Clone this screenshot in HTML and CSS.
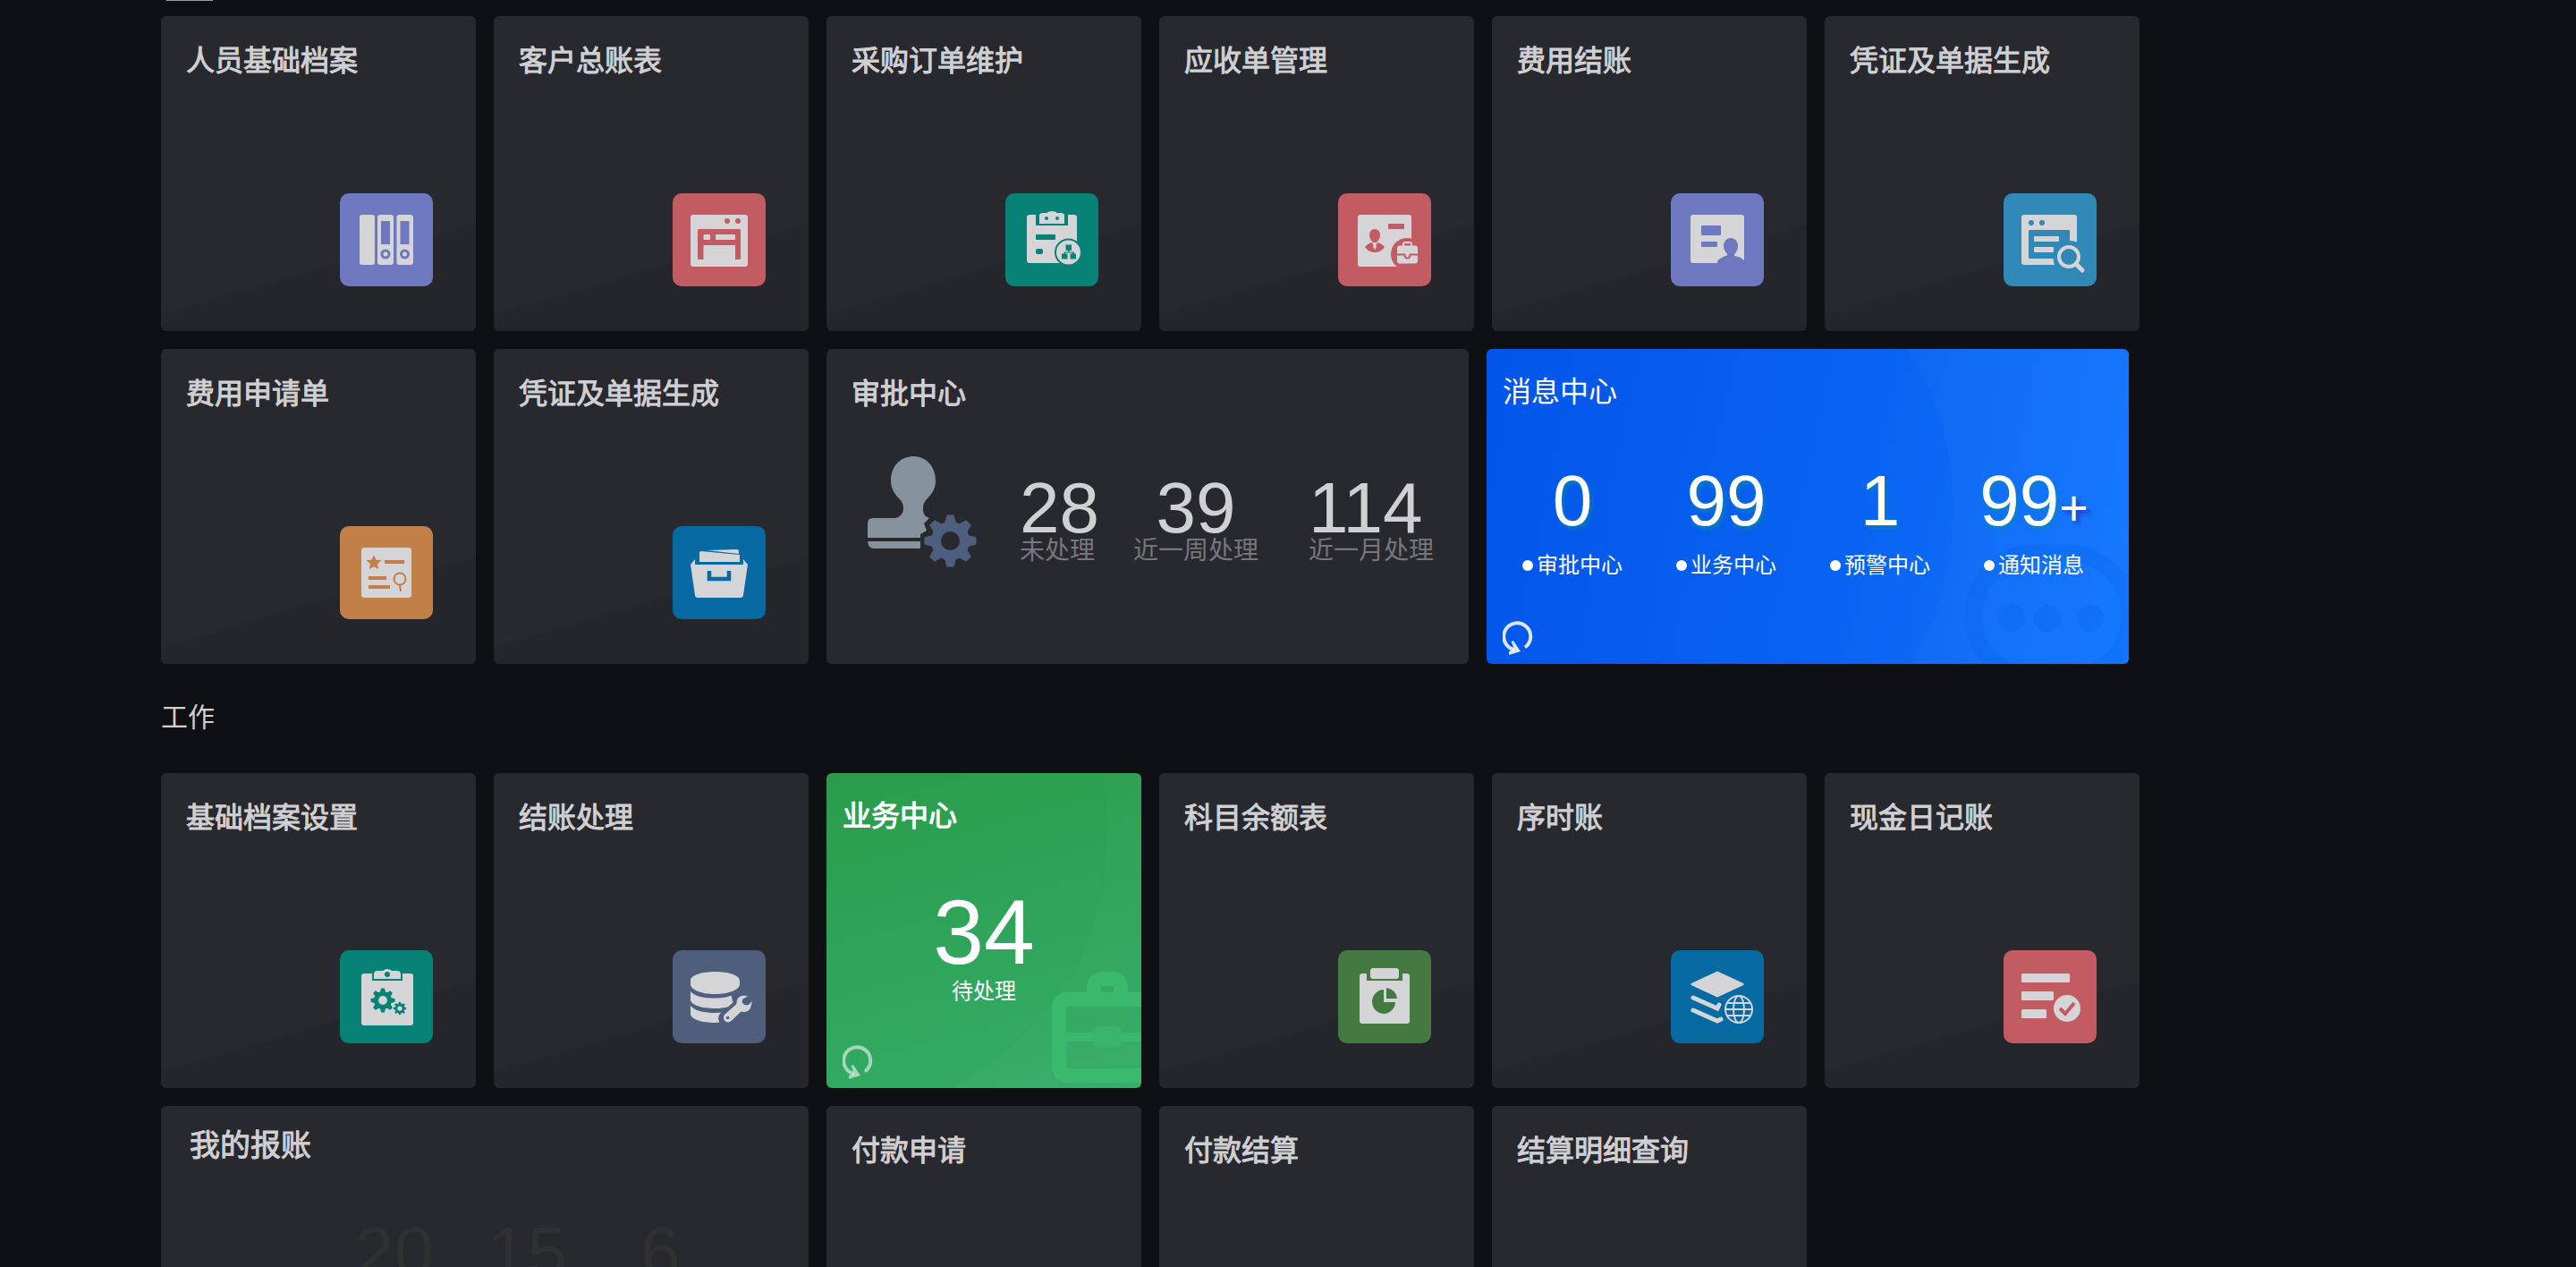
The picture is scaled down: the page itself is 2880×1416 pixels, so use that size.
FILE: index.html
```html
<!DOCTYPE html>
<html lang="zh-CN">
<head>
<meta charset="utf-8">
<title>工作台</title>
<meta name="viewport" content="width=device-width, initial-scale=1">
<link rel="stylesheet" href="styles.css">
</head>
<body>
<svg class="defs" aria-hidden="true">
  <symbol id="gear" viewBox="0 0 60 60">
    <circle cx="30" cy="30" r="16" fill="none" stroke="currentColor" stroke-width="11"/>
    <path fill="currentColor" d="M26 1h8l3 11H23zM26 59h8l3-11H23zM1 26v8l11 3V23zM59 26v8l-11 3V23zM6.700 12.300l5.600-5.600 10 5.600-10 10zM53.300 12.300l-5.600-5.600-10 5.600 10 10zM6.700 47.700l5.600 5.600 10-5.600-10-10zM53.300 47.700l-5.600 5.600-10-5.600 10-10z"/>
  </symbol>
  <symbol id="refresh" viewBox="0 0 34 38">
    <path d="M25 29.500A15 15 0 1 0 13 32" fill="none" stroke="currentColor" stroke-width="4"/>
    <path d="M12 22l8 12-13 4v-4l6-2.500-3.500-8.500z" fill="currentColor"/>
  </symbol>
</svg>
<main class="workspace">
  <div class="tab-line"></div>
  <div class="tiles">
    <a class="tile" href="#"><h3>人员基础档案</h3>
      <svg class="icon purple" viewBox="0 0 104 104"><rect x="22" y="24" width="17" height="56" rx="3"/><rect x="42" y="24" width="18" height="56" rx="3"/><rect x="63.500" y="24" width="18.500" height="56" rx="3"/><g class="cut"><rect x="46" y="31" width="10" height="26"/><rect x="67.500" y="31" width="10" height="26"/><circle cx="51" cy="68" r="5.500"/><circle cx="72.500" cy="68" r="5.500"/></g><circle cx="51" cy="68" r="2.500"/><circle cx="72.500" cy="68" r="2.500"/></svg></a>
    <a class="tile" href="#"><h3>客户总账表</h3>
      <svg class="icon red" viewBox="0 0 104 104"><rect x="20" y="24" width="64" height="58" rx="3"/><g class="cut"><circle cx="61" cy="31" r="3"/><circle cx="73" cy="31" r="3"/><rect x="28" y="40" width="48" height="34" rx="1"/></g><rect x="34.500" y="46" width="7.500" height="6" rx="1"/><rect x="48" y="46" width="22" height="6" rx="1"/><path d="M34.500 59q0-1 1-1H69q1 0 1 1v17H34.500z"/></svg></a>
    <a class="tile" href="#"><h3>采购订单维护</h3>
      <svg class="icon teal" viewBox="0 0 104 104"><rect x="24" y="24" width="56" height="54" rx="3"/><g class="cut"><path d="M34 22h36v14H34z"/><rect x="34" y="46" width="22" height="6" rx="1"/><rect x="34" y="62" width="8" height="6" rx="2"/><circle cx="70.500" cy="66" r="15.500"/></g><path d="M38 25q0-3 4-3h4q2-2 6-2t6 2h4q4 0 4 3v9H38z"/><circle cx="70.500" cy="66" r="13.500"/><g class="cut"><circle cx="46" cy="28" r="2"/><circle cx="58" cy="28" r="2"/><path d="M67.500 57.500h6.500v6.500h-2.500v1.500H77V67.500h2V73.500h-6.500V67.500H75v-1h-8v1h2.500v6H63v-6h2.500v-2H70v-1.500h-2.500z"/></g></svg></a>
    <a class="tile" href="#"><h3>应收单管理</h3>
      <svg class="icon red" viewBox="0 0 104 104"><rect x="22" y="24" width="60" height="58" rx="3"/><g class="cut"><rect x="56" y="34" width="18" height="6" rx="1"/><path d="M41 40c4 0 6 3 6 7 0 3-2 6-3.500 7.500L41 55l-2.500-.500C37 53 35 50 35 47c0-4 2-7 6-7z"/><path d="M30 60q3-4 8-5l3 5 3-5q5 1 8 5-4 6-11 6t-11-6z"/><circle cx="77" cy="68" r="18"/></g><path d="M40 56h2l1 4-2 3-2-3z"/><path d="M73 60v-3q0-2 2-2h5q2 0 2 2v3" fill="none" stroke="#d5d5d7" stroke-width="2"/><rect x="66" y="58.500" width="23" height="20" rx="3"/><path d="M66 68.500h8.500q0 4 3 4t3-4H89" class="cut-line"/></svg></a>
    <a class="tile" href="#"><h3>费用结账</h3>
      <svg class="icon purple" viewBox="0 0 104 104"><rect x="22" y="24" width="60" height="54" rx="3"/><g class="cut"><rect x="34" y="36" width="22" height="11" rx="1"/><rect x="34" y="54" width="18" height="6" rx="1"/><path d="M67 50c5 0 8 4 8 9 0 4-2 7-4 9.500v1.500q7 1 11 5v5H52v-4q4-5 11-6.500v-1.500c-2-2.500-4-5-4-9 0-5 3-9 8-9z"/></g></svg></a>
    <a class="tile" href="#"><h3>凭证及单据生成</h3>
      <svg class="icon sky" viewBox="0 0 104 104"><rect x="20" y="24" width="62" height="56" rx="3"/><g class="cut"><circle cx="31" cy="33" r="3"/><circle cx="43" cy="33" r="3"/><rect x="28" y="41" width="46" height="32" rx="1"/><path d="M74 53q5 0 9 2v26H58q-3-4-2-8z"/></g><rect x="34" y="48" width="28" height="6" rx="1"/><rect x="34" y="60" width="22" height="6" rx="1"/><circle cx="73" cy="71" r="15" class="cut"/><g fill="none" stroke="#d5d5d7" stroke-width="4"><circle cx="73" cy="71" r="11"/><path d="M81 79l7 7" stroke-width="5" stroke-linecap="round"/></g></svg></a>
  </div>

  <div class="tiles tiles-mixed">
    <a class="tile" href="#"><h3>费用申请单</h3>
      <svg class="icon orange" viewBox="0 0 104 104"><rect x="24" y="24" width="56" height="56" rx="3"/><g class="cut"><path d="M38 32l2.500 5.500 6 .700-4.500 4 1.200 6L38 45.200l-5.200 3 1.200-6-4.500-4 6-.700z"/><rect x="50" y="38" width="22" height="4"/><rect x="32" y="56" width="20" height="4"/><rect x="32" y="66" width="24" height="4"/></g><g class="cut-line"><circle cx="67" cy="59" r="6.500"/><path d="M67 65.500l1 7.500"/></g></svg></a>
    <a class="tile" href="#"><h3>凭证及单据生成</h3>
      <svg class="icon blue" viewBox="0 0 104 104"><path d="M20 43l5-6v6h54v-6l5 6-5 34q0 3-3 3H28q-3 0-3-3z"/><path d="M30 30q0-2 2-2l43 4v8H30zM38 27l33-1q3 0 3 2v3z"/><path d="M41 50v9h22v-9" fill="none" stroke="#076aa2" stroke-width="4.500"/></svg></a>
    <section class="tile">
      <h3>审批中心</h3>
      <div class="approval">
        <svg class="stamp" viewBox="0 0 122 124"><path fill="#87939c" d="M51 0c15 0 25 12 25 27 0 9-4 15-9 20-4 4-5 7-5 11 0 7 2 9 7 11l-6 6 3 8-7 4v4H0V75q0-6 6-6h25q9-2 9-11c0-4-1-7-5-11-5-5-9-11-9-20C26 12 36 0 51 0zM0 95h59v8H7q-6 0-7-8z"/><g color="#4e5e7f"><use href="#gear" x="62.500" y="64.500" width="60" height="60"/></g></svg>
        <dl class="stats">
          <div><dd>28</dd><dt>未处理</dt></div>
          <div class="mid"><dd>39</dd><dt>近一周处理</dt></div>
          <div class="last"><dd>114</dd><dt>近一月处理</dt></div>
        </dl>
      </div>
    </section>
    <section class="tile live message">
      <svg class="decor" viewBox="0 0 718 352" preserveAspectRatio="xMaxYMid slice"><path d="M470 0a335 335 0 0 1 4 352h244V0z" fill="#fff" opacity=".025"/><g opacity=".25"><rect x="544" y="228" width="175" height="140" rx="70" fill="none" stroke="#0560ea" stroke-width="19"/><g fill="#0560ea"><circle cx="587" cy="301" r="15"/><circle cx="627" cy="301" r="15"/><circle cx="675" cy="301" r="15"/></g></g></svg>
      <h3>消息中心</h3>
      <dl class="counters">
        <div><dd>0</dd><dt>审批中心</dt></div>
        <div><dd>99</dd><dt>业务中心</dt></div>
        <div><dd>1</dd><dt>预警中心</dt></div>
        <div><dd>99<span>+</span></dd><dt>通知消息</dt></div>
      </dl>
      <button class="refresh" type="button" aria-label="刷新"><svg><use href="#refresh"/></svg></button>
    </section>
  </div>

  <h2>工作</h2>

  <div class="tiles">
    <a class="tile" href="#"><h3>基础档案设置</h3>
      <svg class="icon teal" viewBox="0 0 104 104"><rect x="24" y="26" width="58" height="58" rx="3"/><path class="cut" d="M36 24h34v10H36z"/><path d="M38 27q0-4 4-4h6q2-2 5-2t5 2h6q4 0 4 4v5H38z"/><circle class="cut" cx="53" cy="27" r="3"/><g color="#088176"><use href="#gear" x="34" y="42" width="28" height="28"/><use href="#gear" x="59.500" y="57.500" width="15" height="15"/></g></svg></a>
    <a class="tile" href="#"><h3>结账处理</h3>
      <svg class="icon steel" viewBox="0 0 104 104"><path d="M20 34c0-6 12-10 27.500-10S75 28 75 34v4c0 6-12 11-27.500 11S20 44 20 38zM20 46c5 6 16 7.500 27.500 7.500 8 0 14-1 18-3l2 8-5 4.500c-4 1.500-9 2-15 2C32 65 20 61 20 55zM20 62c5 6 16 8 27.500 8l7-.500c-4 3-4 7-2 11l-5 .500C32 81 20 77 20 71z"/><path d="M84 51q-13-2-12.500 9L58.500 71.500a5 5 0 1 0 7 7.500L76.500 68.500Q88 71 88.500 57l-3.500 4q-4 1-6-1t-1-5z"/><circle class="cut" cx="61.500" cy="75.500" r="1.800"/></svg></a>
    <section class="tile live business">
      <svg class="decor" viewBox="0 0 352 352"><path d="M310 0q18 140-42 235-50 75-128 117h212V0z" fill="#fff" opacity=".014"/><g fill="none" stroke="#3ec274" stroke-width="16" opacity=".6"><rect x="260" y="253" width="130" height="85" rx="8"/><path d="M299 246v-6q0-10 10-10h10q10 0 10 10v6"/><path d="M268 295h84" stroke-width="10"/></g><rect x="299" y="283" width="31" height="24" rx="7" fill="#38b56b"/></svg>
      <h3>业务中心</h3>
      <p class="total"><strong>34</strong>待处理</p>
      <button class="refresh" type="button" aria-label="刷新"><svg><use href="#refresh"/></svg></button>
    </section>
    <a class="tile" href="#"><h3>科目余额表</h3>
      <svg class="icon green" viewBox="0 0 104 104"><rect x="24" y="26" width="56" height="56" rx="3"/><path class="cut" d="M32 24h40v10H32z"/><rect x="36" y="20" width="32" height="12" rx="3"/><path class="cut" d="M51 44v14h13a13 13.500 0 1 1-13-14zM54 42q11 2 12 12H54z"/></svg></a>
    <a class="tile" href="#"><h3>序时账</h3>
      <svg class="icon blue" viewBox="0 0 104 104"><path d="M52 25L80 38 52 51 24 38z" stroke="#d5d5d7" stroke-width="3" stroke-linejoin="round"/><g fill="none" stroke="#d5d5d7"><path d="M25 53l27 12 2-4M25 67l27 12 4-2" stroke-width="5" stroke-linecap="round"/></g><circle class="cut" cx="76" cy="66" r="19"/><g fill="none" stroke="#d5d5d7" stroke-width="2"><circle cx="76" cy="66" r="15"/><ellipse cx="76" cy="66" rx="6" ry="15"/><path d="M63 59h26M61 66h30M63 73h26"/></g></svg></a>
    <a class="tile" href="#"><h3>现金日记账</h3>
      <svg class="icon red" viewBox="0 0 104 104"><rect x="20" y="26" width="54" height="10" rx="1"/><rect x="20" y="46" width="36" height="10" rx="1"/><rect x="20" y="66" width="28" height="10" rx="1"/><circle cx="71" cy="65" r="15"/><path class="cut-line check" d="M63 65l6 6 10-12"/></svg></a>
    <section class="tile wide claims">
      <h3>我的报账</h3>
      <ul><li>20</li><li>15</li><li>6</li></ul>
    </section>
    <a class="tile" href="#"><h3>付款申请</h3></a>
    <a class="tile" href="#"><h3>付款结算</h3></a>
    <a class="tile" href="#"><h3>结算明细查询</h3></a>
  </div>
</main>
</body>
</html>
```
FILE: styles.css
```css
* {
  box-sizing: border-box;
}

body {
  margin: 0;
  background: #0e1013;
  color: #d0d0d2;
  font-family: "Liberation Sans", "Noto Sans CJK SC", sans-serif;
}

h2, h3, p, dl, dd, dt, ul {
  margin: 0;
  padding: 0;
}

.defs {
  position: absolute;
  width: 0;
  height: 0;
}

.workspace {
  height: 100vh;
  overflow: hidden;
  padding: 0 488px 0 180px;
}

.tab-line {
  width: 52px;
  height: 1px;
  margin: 0 0 17px 6px;
  background: #98989a;
}

h2 {
  margin: 40px 0 42px;
  font-size: 30px;
  font-weight: 400;
  line-height: 40px;
}

.tiles {
  display: grid;
  grid-template-columns: repeat(6, minmax(0, 1fr));
  gap: 20px;
}

.tiles-mixed {
  grid-template-columns: 352fr 352fr 718fr 718fr;
  margin: 20px 12px 0 0;
}

.tile {
  position: relative;
  display: flex;
  flex-direction: column;
  justify-content: space-between;
  min-height: 352px;
  padding: 30px 48px 50px 28px;
  overflow: hidden;
  border-radius: 6px;
  background: #28282f;
  color: inherit;
  text-decoration: none;
}

a.tile {
  background: linear-gradient(164deg, #28282f 73%, #25252c 74%);
}

.tile h3 {
  font-size: 32px;
  font-weight: 400;
  line-height: 40px;
  white-space: nowrap;
  -webkit-text-stroke: 1px currentColor;
}

.wide {
  grid-column: span 2;
}

.icon {
  align-self: flex-end;
  width: 104px;
  height: 104px;
  border-radius: 10px;
  background: var(--tone);
  fill: #d5d5d7;
}

.icon .cut {
  fill: var(--tone);
}

.icon .cut-line {
  fill: none;
  stroke: var(--tone);
  stroke-width: 2;
}

.icon .check {
  stroke-width: 4;
}

.purple { --tone: #6e78bf; }
.red { --tone: #c35c62; }
.teal { --tone: #088176; }
.sky { --tone: #3088b6; }
.orange { --tone: #c28049; }
.blue { --tone: #076aa2; }
.steel { --tone: #4e5e7c; }
.green { --tone: #447941; }

.approval {
  display: flex;
  flex: 1;
  align-items: flex-start;
  gap: 48px;
  padding: 50px 0 0 18px;
}

.stamp {
  flex: none;
  width: 122px;
  height: 124px;
}

.stats {
  display: flex;
  gap: 38px;
  padding-top: 26px;
}

.stats div,
.counters div {
  display: flex;
  flex-direction: column;
}

.stats dd,
.counters dd,
.claims li {
  font-size: 80px;
  line-height: 64px;
}

.stats dt {
  color: #77777b;
  font-size: 28px;
  line-height: 32px;
  white-space: nowrap;
}

.stats .mid dd {
  text-align: center;
}

.stats .last {
  padding-left: 18px;
}

.tile.live {
  justify-content: flex-start;
  padding: 28px 18px 10px;
  color: #fff;
}

.live > * {
  position: relative;
}

.live .decor {
  position: absolute;
  inset: 0;
  width: 100%;
  height: 100%;
}

.message {
  background: linear-gradient(102deg, #0255e9, #0962f1 55%, #1177ff);
}

.tile.message h3 {
  -webkit-text-stroke: 0;
}

.counters {
  display: grid;
  grid-template-columns: repeat(4, 1fr);
  margin: 70px 2px 0 -8px;
}

.counters div {
  align-items: center;
  gap: 24px;
}

.counters dd {
  text-shadow: 2px 3px 5px rgba(0, 150, 150, .6);
}

.counters span {
  font-size: 56px;
  line-height: 0;
  text-shadow: 4px 4px 4px rgba(40, 30, 160, .6);
}

.counters dt {
  display: flex;
  align-items: center;
  gap: 4px;
  font-size: 24px;
  line-height: 32px;
}

.counters dt::before {
  content: "";
  width: 12px;
  height: 12px;
  border-radius: 50%;
  background: #fff;
}

.refresh {
  width: 34px;
  height: 38px;
  margin-top: auto;
  padding: 0;
  border: 0;
  background: none;
  color: rgba(255, 255, 255, .85);
  cursor: pointer;
}

.refresh svg {
  display: block;
  width: 34px;
  height: 38px;
}

.business {
  background: linear-gradient(165deg, #2a9c4b, #34ad69);
}

.business .refresh {
  color: rgba(255, 255, 255, .55);
}

.total {
  display: flex;
  flex-direction: column;
  align-items: center;
  gap: 10px;
  margin-top: 70px;
  font-size: 24px;
  line-height: 32px;
}

.total strong {
  font-size: 102px;
  font-weight: 400;
  line-height: 80px;
}

.tile.claims {
  justify-content: flex-start;
  padding: 24px 32px;
}

.claims h3 {
  font-size: 34px;
}

.claims ul {
  display: grid;
  grid-template-columns: repeat(3, 149px);
  padding: 68px 0 0 154px;
  list-style: none;
  color: #303031;
  text-align: center;
}
```
